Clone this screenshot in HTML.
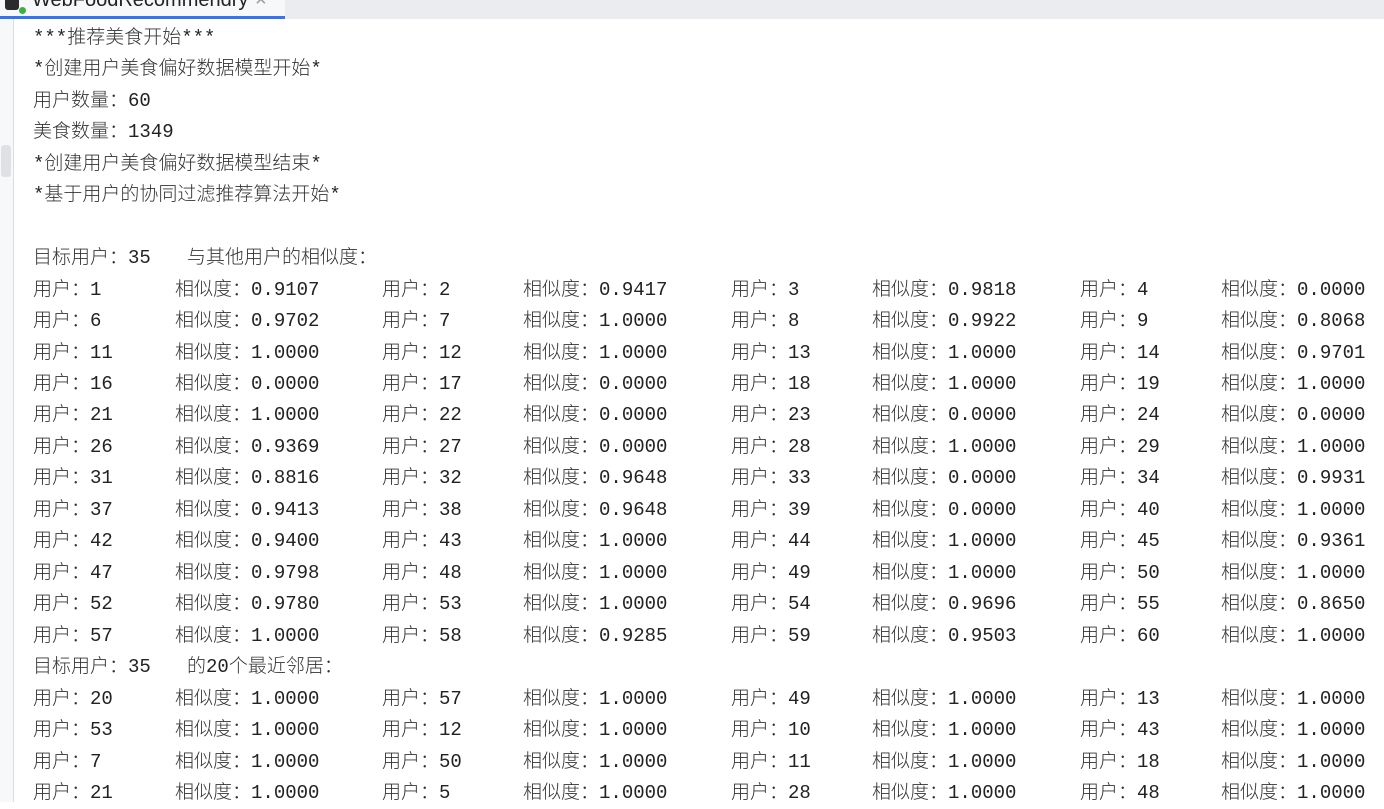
<!DOCTYPE html>
<html><head><meta charset="utf-8"><style>
body{margin:0;width:1384px;height:802px;overflow:hidden;background:#fff;position:relative;font-family:"Liberation Mono","Noto Sans CJK SC",monospace;font-size:19px;color:#222}
.tabbar{position:absolute;left:0;top:0;width:1384px;height:19px;background:#ebecf0}
.tab{position:absolute;left:0;top:0;width:285px;height:19px;background:#f7f8fa;border-bottom:3px solid #3574f0;box-sizing:border-box;overflow:hidden}
.tab span{position:absolute;left:32px;top:-11px;font-family:"Liberation Sans",sans-serif;font-size:20px;color:#222}
.gutter{position:absolute;left:0;top:19px;width:13px;height:783px;background:#f7f8fa;border-right:1px solid #dcdde0}
.r{position:absolute;left:0;width:1384px;height:32px;line-height:32px;white-space:pre}
.r span{position:absolute;top:0;white-space:pre}
i{font-style:normal;color:#333;font-family:"Noto Sans CJK SC","WenQuanYi Zen Hei",sans-serif;font-weight:300}
.a{left:33px}.b{left:175px}.c{left:382px}.d{left:523px}.e{left:731px}.f{left:872px}.g{left:1080px}.h{left:1221px}.t{left:187px}
</style></head><body>
<div class="tabbar"><div class="tab"><div style="position:absolute;left:5px;top:0;width:14px;height:10px;background:#2b2b2b;border-radius:0 0 3px 3px"></div><div style="position:absolute;left:19px;top:7px;width:7px;height:7px;background:#3cb043;border-radius:50%"></div><span>WebFoodRecommendry</span><span style="left:255px;color:#999">×</span></div></div>
<div class="gutter"><div style="position:absolute;left:1px;top:126px;width:10px;height:32px;background:#dfe1e5;border-radius:3px"></div></div>

<div class="r" style="top:20px"><span class="a">***<i>推荐美食开始</i>***</span></div>
<div class="r" style="top:51px"><span class="a">*<i>创建用户美食偏好数据模型开始</i>*</span></div>
<div class="r" style="top:83px"><span class="a"><i>用户数量：</i>60</span></div>
<div class="r" style="top:114px"><span class="a"><i>美食数量：</i>1349</span></div>
<div class="r" style="top:146px"><span class="a">*<i>创建用户美食偏好数据模型结束</i>*</span></div>
<div class="r" style="top:177px"><span class="a">*<i>基于用户的协同过滤推荐算法开始</i>*</span></div>

<div class="r" style="top:240px"><span class="a"><i>目标用户：</i>35</span><span class="t"><i>与其他用户的相似度：</i></span></div>
<div class="r" style="top:272px"><span class="a"><i>用户：</i>1</span><span class="b"><i>相似度：</i>0.9107</span><span class="c"><i>用户：</i>2</span><span class="d"><i>相似度：</i>0.9417</span><span class="e"><i>用户：</i>3</span><span class="f"><i>相似度：</i>0.9818</span><span class="g"><i>用户：</i>4</span><span class="h"><i>相似度：</i>0.0000</span></div>
<div class="r" style="top:303px"><span class="a"><i>用户：</i>6</span><span class="b"><i>相似度：</i>0.9702</span><span class="c"><i>用户：</i>7</span><span class="d"><i>相似度：</i>1.0000</span><span class="e"><i>用户：</i>8</span><span class="f"><i>相似度：</i>0.9922</span><span class="g"><i>用户：</i>9</span><span class="h"><i>相似度：</i>0.8068</span></div>
<div class="r" style="top:335px"><span class="a"><i>用户：</i>11</span><span class="b"><i>相似度：</i>1.0000</span><span class="c"><i>用户：</i>12</span><span class="d"><i>相似度：</i>1.0000</span><span class="e"><i>用户：</i>13</span><span class="f"><i>相似度：</i>1.0000</span><span class="g"><i>用户：</i>14</span><span class="h"><i>相似度：</i>0.9701</span></div>
<div class="r" style="top:366px"><span class="a"><i>用户：</i>16</span><span class="b"><i>相似度：</i>0.0000</span><span class="c"><i>用户：</i>17</span><span class="d"><i>相似度：</i>0.0000</span><span class="e"><i>用户：</i>18</span><span class="f"><i>相似度：</i>1.0000</span><span class="g"><i>用户：</i>19</span><span class="h"><i>相似度：</i>1.0000</span></div>
<div class="r" style="top:397px"><span class="a"><i>用户：</i>21</span><span class="b"><i>相似度：</i>1.0000</span><span class="c"><i>用户：</i>22</span><span class="d"><i>相似度：</i>0.0000</span><span class="e"><i>用户：</i>23</span><span class="f"><i>相似度：</i>0.0000</span><span class="g"><i>用户：</i>24</span><span class="h"><i>相似度：</i>0.0000</span></div>
<div class="r" style="top:429px"><span class="a"><i>用户：</i>26</span><span class="b"><i>相似度：</i>0.9369</span><span class="c"><i>用户：</i>27</span><span class="d"><i>相似度：</i>0.0000</span><span class="e"><i>用户：</i>28</span><span class="f"><i>相似度：</i>1.0000</span><span class="g"><i>用户：</i>29</span><span class="h"><i>相似度：</i>1.0000</span></div>
<div class="r" style="top:460px"><span class="a"><i>用户：</i>31</span><span class="b"><i>相似度：</i>0.8816</span><span class="c"><i>用户：</i>32</span><span class="d"><i>相似度：</i>0.9648</span><span class="e"><i>用户：</i>33</span><span class="f"><i>相似度：</i>0.0000</span><span class="g"><i>用户：</i>34</span><span class="h"><i>相似度：</i>0.9931</span></div>
<div class="r" style="top:492px"><span class="a"><i>用户：</i>37</span><span class="b"><i>相似度：</i>0.9413</span><span class="c"><i>用户：</i>38</span><span class="d"><i>相似度：</i>0.9648</span><span class="e"><i>用户：</i>39</span><span class="f"><i>相似度：</i>0.0000</span><span class="g"><i>用户：</i>40</span><span class="h"><i>相似度：</i>1.0000</span></div>
<div class="r" style="top:523px"><span class="a"><i>用户：</i>42</span><span class="b"><i>相似度：</i>0.9400</span><span class="c"><i>用户：</i>43</span><span class="d"><i>相似度：</i>1.0000</span><span class="e"><i>用户：</i>44</span><span class="f"><i>相似度：</i>1.0000</span><span class="g"><i>用户：</i>45</span><span class="h"><i>相似度：</i>0.9361</span></div>
<div class="r" style="top:555px"><span class="a"><i>用户：</i>47</span><span class="b"><i>相似度：</i>0.9798</span><span class="c"><i>用户：</i>48</span><span class="d"><i>相似度：</i>1.0000</span><span class="e"><i>用户：</i>49</span><span class="f"><i>相似度：</i>1.0000</span><span class="g"><i>用户：</i>50</span><span class="h"><i>相似度：</i>1.0000</span></div>
<div class="r" style="top:586px"><span class="a"><i>用户：</i>52</span><span class="b"><i>相似度：</i>0.9780</span><span class="c"><i>用户：</i>53</span><span class="d"><i>相似度：</i>1.0000</span><span class="e"><i>用户：</i>54</span><span class="f"><i>相似度：</i>0.9696</span><span class="g"><i>用户：</i>55</span><span class="h"><i>相似度：</i>0.8650</span></div>
<div class="r" style="top:618px"><span class="a"><i>用户：</i>57</span><span class="b"><i>相似度：</i>1.0000</span><span class="c"><i>用户：</i>58</span><span class="d"><i>相似度：</i>0.9285</span><span class="e"><i>用户：</i>59</span><span class="f"><i>相似度：</i>0.9503</span><span class="g"><i>用户：</i>60</span><span class="h"><i>相似度：</i>1.0000</span></div>
<div class="r" style="top:649px"><span class="a"><i>目标用户：</i>35</span><span class="t"><i>的</i>20<i>个最近邻居：</i></span></div>
<div class="r" style="top:681px"><span class="a"><i>用户：</i>20</span><span class="b"><i>相似度：</i>1.0000</span><span class="c"><i>用户：</i>57</span><span class="d"><i>相似度：</i>1.0000</span><span class="e"><i>用户：</i>49</span><span class="f"><i>相似度：</i>1.0000</span><span class="g"><i>用户：</i>13</span><span class="h"><i>相似度：</i>1.0000</span></div>
<div class="r" style="top:712px"><span class="a"><i>用户：</i>53</span><span class="b"><i>相似度：</i>1.0000</span><span class="c"><i>用户：</i>12</span><span class="d"><i>相似度：</i>1.0000</span><span class="e"><i>用户：</i>10</span><span class="f"><i>相似度：</i>1.0000</span><span class="g"><i>用户：</i>43</span><span class="h"><i>相似度：</i>1.0000</span></div>
<div class="r" style="top:744px"><span class="a"><i>用户：</i>7</span><span class="b"><i>相似度：</i>1.0000</span><span class="c"><i>用户：</i>50</span><span class="d"><i>相似度：</i>1.0000</span><span class="e"><i>用户：</i>11</span><span class="f"><i>相似度：</i>1.0000</span><span class="g"><i>用户：</i>18</span><span class="h"><i>相似度：</i>1.0000</span></div>
<div class="r" style="top:775px"><span class="a"><i>用户：</i>21</span><span class="b"><i>相似度：</i>1.0000</span><span class="c"><i>用户：</i>5</span><span class="d"><i>相似度：</i>1.0000</span><span class="e"><i>用户：</i>28</span><span class="f"><i>相似度：</i>1.0000</span><span class="g"><i>用户：</i>48</span><span class="h"><i>相似度：</i>1.0000</span></div>
</body></html>
